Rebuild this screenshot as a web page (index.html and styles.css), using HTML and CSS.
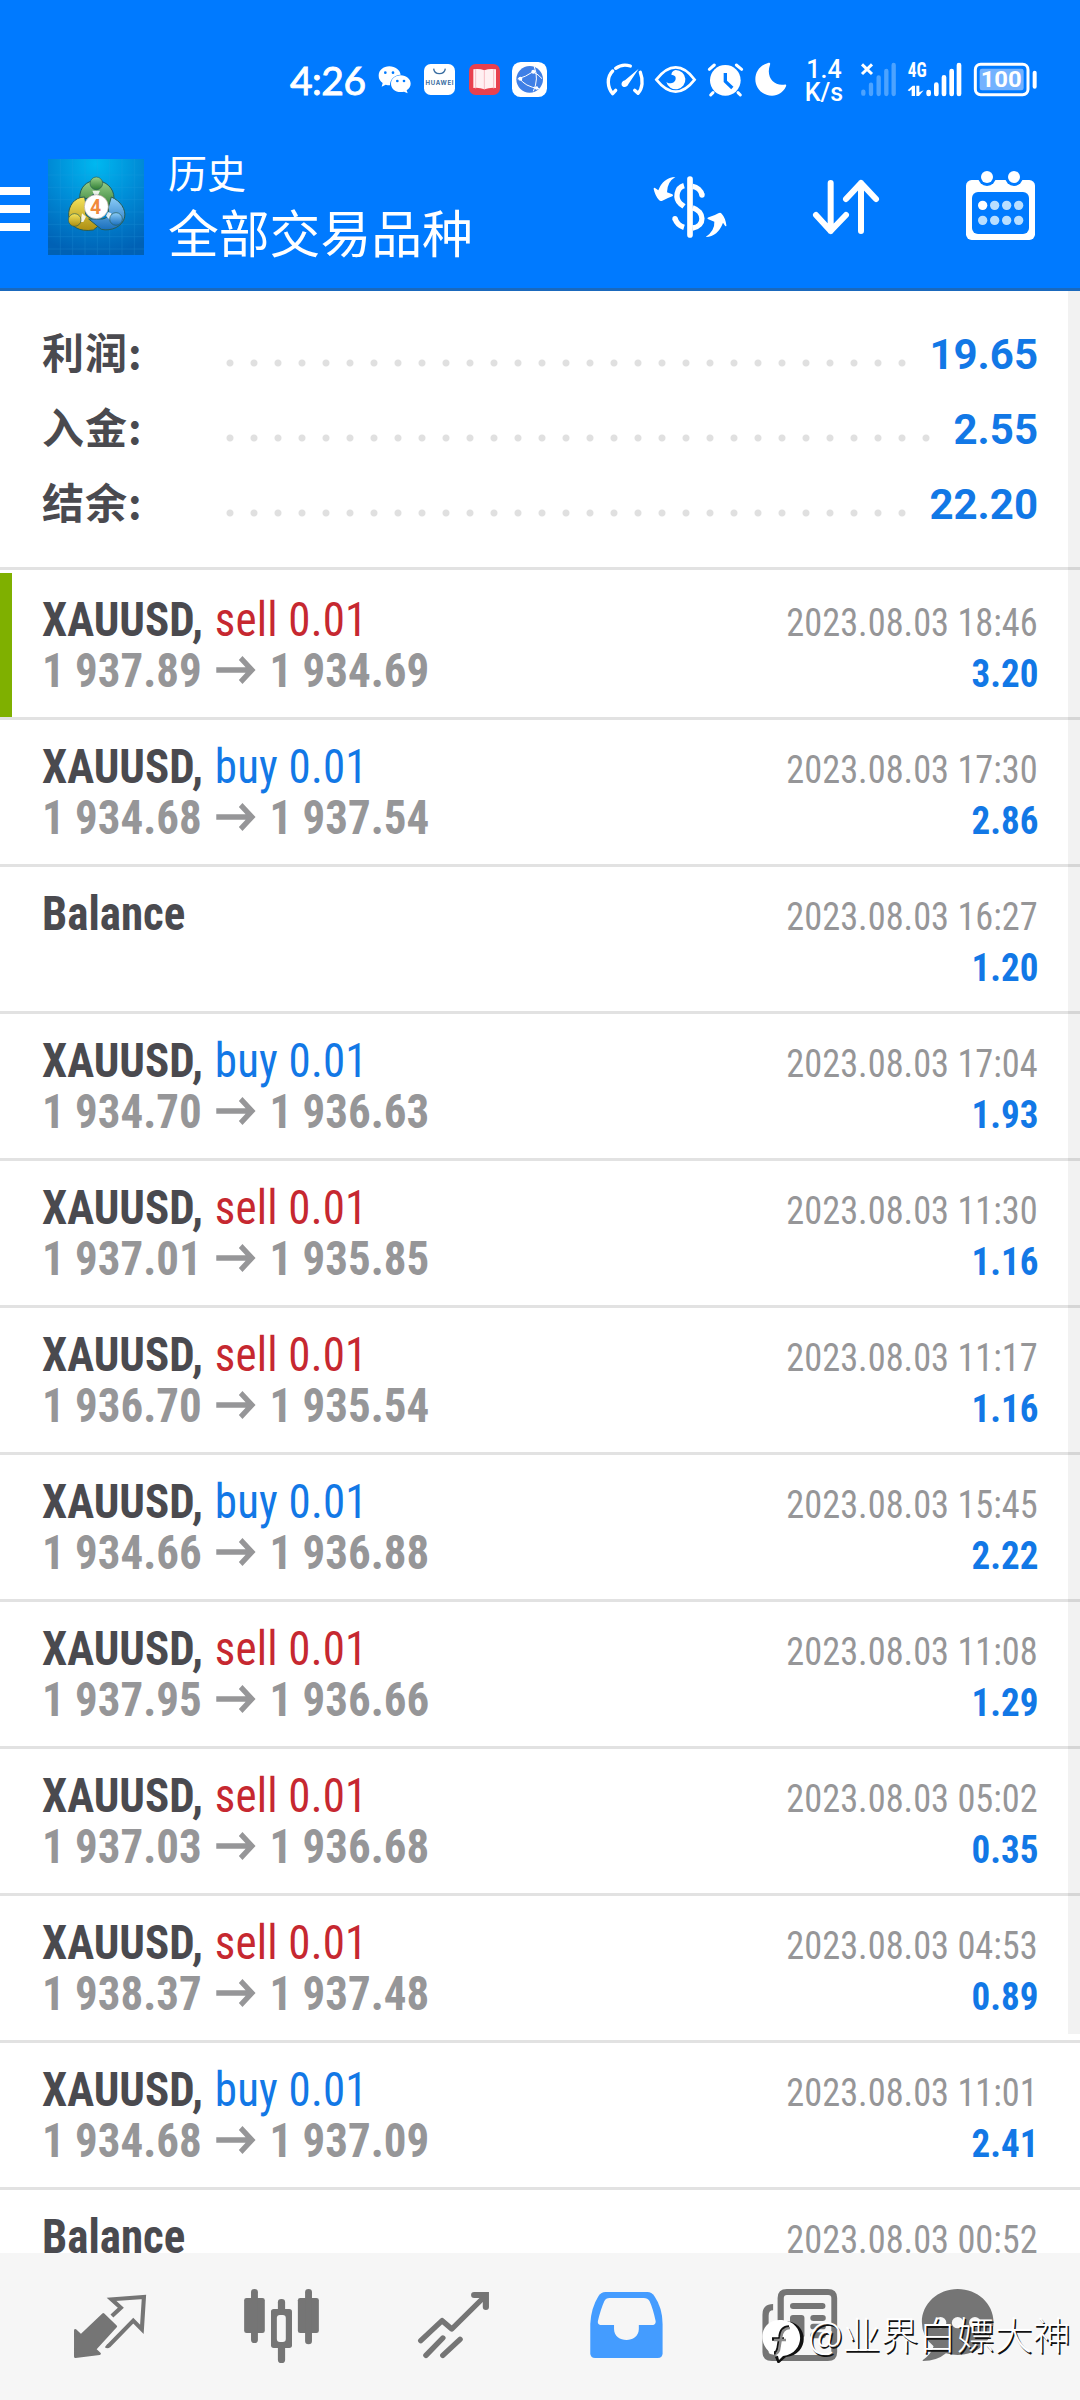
FILE: index.html
```html
<!DOCTYPE html>
<html lang="zh-CN">
<head>
<meta charset="utf-8">
<title>历史</title>
<link rel="stylesheet" href="styles.css">
</head>
<body>
<div class="screen">
  <header class="header">
    <div class="status">
      <span class="clock">4:26</span>
      <svg width="45" height="80" viewBox="315 0 135 240"><path fill="#fff" d="M358 79c-18 0-32 12-32 28 0 9 4 16 12 22l-3 11 12-6c4 1 8 2 13 2 0-18 13-31 32-32-2-14-16-25-34-25z"/><path fill="#fff" d="M392 106c-17 0-29 11-29 25s12 25 29 25c4 0 7 0 10-1l11 5-3-9c7-5 12-12 12-20 0-14-13-25-30-25z"/><g fill="#007aff"><circle cx="346" cy="98" r="4"/><circle cx="369" cy="98" r="4"/><circle cx="382" cy="123" r="4"/><circle cx="402" cy="123" r="4"/></g></svg>
      <svg width="44" height="80" viewBox="450 0 132 240"><rect x="462" y="72" width="93" height="93" rx="20" fill="#fff"/><path d="M491 86c2 20 32 20 35 0" fill="none" stroke="#386ca0" stroke-width="4"/><text x="508.500" y="134" class="store-name" text-anchor="middle" textLength="84">HUAWEI</text></svg>
      <svg width="43" height="80" viewBox="582 0 129 240"><rect x="597" y="72" width="93" height="93" rx="20" fill="#e8404e"/><path fill="#fff0f2" d="M610 88q18-3 33 3 15-6 35-3v56q-18-2-35 4-15-6-33-4z"/><path d="M643 90v58M617 88v57M671 88v57" stroke="#f7bcc4" stroke-width="3"/></svg>
      <svg width="44" height="80" viewBox="711 0 132 240"><rect x="726" y="66" width="105" height="105" rx="26" fill="#fff"/><circle cx="779" cy="118" r="40" fill="#3f7fe6"/><g fill="none" stroke="#fff" stroke-width="3"><path d="M793 81q14 35-3 73M743 117q25-7 45-21M748 114q16 26 59 32M790 96q15 7 26 20"/></g><g fill="#fff"><circle cx="790" cy="95" r="6"/><circle cx="751" cy="116" r="6"/><circle cx="800" cy="144" r="5"/></g></svg>
      <svg class="status-right" width="60" height="80" viewBox="0 0 180 240"><g fill="none" stroke="#fff" stroke-width="10" stroke-linecap="round" stroke-linejoin="round"><path d="M121 78Q97 70 77 85M68 93C49 112 52 142 68 161L77 151M151 97C160 120 158 145 144 160L134 151"/></g><path fill="#fff" d="M146 86l-31 47c-5 14-26 9-19-6q2-4 9-6z"/></svg>
      <svg width="52" height="80" viewBox="180 0 156 240"><path d="M199 119q28-37 58-37t57 37q-28 36-57 36t-58-36z" fill="none" stroke="#fff" stroke-width="8"/><path fill="#fff" d="M257 90a29 29 0 1 1-28 36c9 8 27 3 28-10 1-8-4-11-13-12 1-8 6-13 13-14z"/></svg>
      <svg width="47" height="80" viewBox="336 0 141 240"><circle cx="406" cy="121" r="46" fill="#fff"/><path d="M358 88l15-13M439 75l16 13M369 158l-7 7M444 158l7 7" stroke="#fff" stroke-width="9" stroke-linecap="round"/><path d="M406 99v25l21 20" fill="none" stroke="#007aff" stroke-width="10"/></svg>
      <svg width="41" height="80" viewBox="477 0 123 240"><path fill="#fff" d="M534 69c5-2 8 1 6 5-13 37 11 65 43 60 6-1 7 2 4 7-8 16-22 26-41 26-29 0-50-22-50-49 0-23 15-43 38-49z"/></svg>
      <div class="speed"><span>1.4</span><span>K/s</span></div>
      <svg width="49" height="80" viewBox="789 0 147 240"><path d="M816 73l30 29M846 73l-30 29" stroke="#fff" stroke-width="9"/><path d="M820 155v6M843 134v28M866 112v50M889 93v69M911 75v87" stroke="#4da3ff" stroke-width="13" stroke-linecap="round"/></svg>
      <svg width="64" height="80" viewBox="936 0 192 240"><text x="953" y="112" class="net" textLength="57" lengthAdjust="spacingAndGlyphs">4G</text><path d="M1016 156v6M1039 134v28M1062 112v50M1085 93v69M1107 75v87" stroke="#fff" stroke-width="14" stroke-linecap="round"/><path fill="#fff" d="M953 151l15-14h7v31h-10v-20l-7 6zM979 137h9v20l13-6-14 17h-8z"/></svg>
      <svg width="74" height="80" viewBox="1128 0 222 240"><rect x="1156" y="73" width="158" height="91" rx="16" fill="none" stroke="#fff" stroke-width="9"/><rect x="1169" y="86" width="132" height="65" rx="7" fill="#73b2ff"/><path d="M1334 98v42" stroke="#fff" stroke-width="12" stroke-linecap="round"/><text x="1172" y="142" class="charge" textLength="123" lengthAdjust="spacingAndGlyphs">100</text></svg>
    </div>
    <div class="toolbar">
      <div class="burger"><i></i><i></i><i></i></div>
      <svg class="logo" width="96" height="96" viewBox="144 57 288 288">
        <defs>
          <radialGradient id="sky" cx=".5" cy=".05" r=".95"><stop offset="0" stop-color="#00b8f0"/><stop offset=".5" stop-color="#008bd6"/><stop offset="1" stop-color="#0061b5"/></radialGradient>
          <linearGradient id="green" x2="0" y2="1"><stop offset="0" stop-color="#9ad18a"/><stop offset="1" stop-color="#2f7d34"/></linearGradient>
          <linearGradient id="gold" x2="0" y2="1"><stop offset="0" stop-color="#f5e45c"/><stop offset="1" stop-color="#ad8e12"/></linearGradient>
          <linearGradient id="blue" x2="0" y2="1"><stop offset="0" stop-color="#8ccdf8"/><stop offset="1" stop-color="#1a6fbd"/></linearGradient>
        </defs>
        <rect x="144" y="57" width="288" height="288" fill="url(#sky)"/>
        <path d="M181 57v288M218 57v288M255 57v288M292 57v288M329 57v288M366 57v288M403 57v288M144 105h288M144 142h288M144 179h288M144 216h288M144 253h288M144 290h288M144 327h288" stroke="#2aa4e4" stroke-width="2" opacity=".3"/>
        <g stroke="#285d55" stroke-width="3">
          <path fill="url(#green)" d="M239 174c0-32 20-52 49-52s54 22 54 52l-7 32-32-32q-15-26-35 0l-27 4z"/>
          <path fill="url(#gold)" d="M254 171c-31 0-50 27-48 58 2 29 31 48 74 41l16-13-25-23q-22-8-12-32z"/>
          <path fill="url(#blue)" d="M334 171c28 12 44 37 40 60-5 28-40 44-70 37l-38-31h41q24-2 18-35z"/>
        </g>
        <path fill="#fff" d="M277 152h23l-6 14h-11zM246 220l12 10-8 16h-8zM324 216l10 4v24l-16-16z" opacity=".85"/>
        <g stroke="#285d55" stroke-width="2"><circle cx="289" cy="130" r="19" fill="url(#green)"/><circle cx="224" cy="240" r="19" fill="url(#gold)"/><circle cx="348" cy="237" r="19" fill="url(#blue)"/></g>
        <circle cx="289" cy="200" r="36" fill="#fff" stroke="#b9a99a" stroke-width="2"/>
        <text x="287" y="221" class="logo-digit" text-anchor="middle">4</text>
      </svg>
      <div class="titles"><div class="title-small">历史</div><div class="title-main">全部交易品种</div></div>
      <svg class="icon-currency" width="80" height="72" viewBox="90 90 240 216"><g fill="none" stroke="#fff"><path d="M210 117v168" stroke-width="17" stroke-linecap="round"/><path d="M192 137c-23 7-28 38-11 54l11 8M218 139c13 2 25 12 28 26" stroke-width="16"/><path d="M218 203c36 12 38 55 0 61M192 262c-13-4-23-14-27-26" stroke-width="16"/></g><circle cx="246" cy="165" r="8" fill="#fff"/><circle cx="165" cy="236" r="8" fill="#fff"/><path fill="#fff" d="M166 111q-37 2-51 40l-10-7q-4-2-4 3 5 22 16 33 4 5 10 2 14-7 30-13 5-3 0-6l-16-6q0-31 25-46zM257 291q37-2 52-43l6 9q5 4 4-2-3-22-14-34-4-5-10-1-11 7-29 12-7 3-1 6l18 7q2 26-26 46z"/></svg>
      <svg class="icon-sort" width="73" height="63" viewBox="570 108 219 189"><path d="M632 129v144M588 225l44 48 46-48M723 273V129M678 177l45-48 45 48" fill="none" stroke="#fff" stroke-width="18" stroke-linecap="round" stroke-linejoin="round"/></svg>
      <svg class="icon-calendar" width="75" height="75" viewBox="1029 84 225 225"><rect x="1038" y="120" width="207" height="180" rx="17" fill="#fff"/><rect x="1056" y="156" width="171" height="126" rx="18" fill="#007aff"/><circle cx="1101" cy="111" r="27" fill="#007aff"/><circle cx="1182" cy="111" r="27" fill="#007aff"/><g fill="#fff"><circle cx="1101" cy="111" r="18"/><circle cx="1182" cy="111" r="18"/><circle cx="1088" cy="196" r="14"/></g><g fill="#b9deff"><circle cx="1124" cy="196" r="14"/><circle cx="1160" cy="196" r="14"/><circle cx="1196" cy="196" r="14"/><circle cx="1088" cy="241" r="14"/><circle cx="1124" cy="241" r="14"/><circle cx="1160" cy="241" r="14"/><circle cx="1196" cy="241" r="14"/></g></svg>
    </div>
  </header>

  <main class="content">
    <section class="summary">
      <div class="sum-row"><span class="sum-label">利润:</span><span class="dots"></span><span class="sum-value">19.65</span></div>
      <div class="sum-row"><span class="sum-label">入金:</span><span class="dots"></span><span class="sum-value">2.55</span></div>
      <div class="sum-row"><span class="sum-label">结余:</span><span class="dots"></span><span class="sum-value">22.20</span></div>
    </section>
    <section class="deals">
      <article class="deal marked"><div class="line"><span class="sym">XAUUSD, <span class="sell">sell 0.01</span></span><time>2023.08.03 18:46</time></div><div class="line"><span class="price">1 937.89 <svg class="arrow" viewBox="0 0 42 28"><path d="M0 14h38M26 2l12 12-12 12"/></svg> 1 934.69</span><span class="profit">3.20</span></div></article>
      <article class="deal"><div class="line"><span class="sym">XAUUSD, <span class="buy">buy 0.01</span></span><time>2023.08.03 17:30</time></div><div class="line"><span class="price">1 934.68 <svg class="arrow" viewBox="0 0 42 28"><path d="M0 14h38M26 2l12 12-12 12"/></svg> 1 937.54</span><span class="profit">2.86</span></div></article>
      <article class="deal"><div class="line"><span class="sym">Balance</span><time>2023.08.03 16:27</time></div><div class="line"><span class="price">&nbsp;</span><span class="profit">1.20</span></div></article>
      <article class="deal"><div class="line"><span class="sym">XAUUSD, <span class="buy">buy 0.01</span></span><time>2023.08.03 17:04</time></div><div class="line"><span class="price">1 934.70 <svg class="arrow" viewBox="0 0 42 28"><path d="M0 14h38M26 2l12 12-12 12"/></svg> 1 936.63</span><span class="profit">1.93</span></div></article>
      <article class="deal"><div class="line"><span class="sym">XAUUSD, <span class="sell">sell 0.01</span></span><time>2023.08.03 11:30</time></div><div class="line"><span class="price">1 937.01 <svg class="arrow" viewBox="0 0 42 28"><path d="M0 14h38M26 2l12 12-12 12"/></svg> 1 935.85</span><span class="profit">1.16</span></div></article>
      <article class="deal"><div class="line"><span class="sym">XAUUSD, <span class="sell">sell 0.01</span></span><time>2023.08.03 11:17</time></div><div class="line"><span class="price">1 936.70 <svg class="arrow" viewBox="0 0 42 28"><path d="M0 14h38M26 2l12 12-12 12"/></svg> 1 935.54</span><span class="profit">1.16</span></div></article>
      <article class="deal"><div class="line"><span class="sym">XAUUSD, <span class="buy">buy 0.01</span></span><time>2023.08.03 15:45</time></div><div class="line"><span class="price">1 934.66 <svg class="arrow" viewBox="0 0 42 28"><path d="M0 14h38M26 2l12 12-12 12"/></svg> 1 936.88</span><span class="profit">2.22</span></div></article>
      <article class="deal"><div class="line"><span class="sym">XAUUSD, <span class="sell">sell 0.01</span></span><time>2023.08.03 11:08</time></div><div class="line"><span class="price">1 937.95 <svg class="arrow" viewBox="0 0 42 28"><path d="M0 14h38M26 2l12 12-12 12"/></svg> 1 936.66</span><span class="profit">1.29</span></div></article>
      <article class="deal"><div class="line"><span class="sym">XAUUSD, <span class="sell">sell 0.01</span></span><time>2023.08.03 05:02</time></div><div class="line"><span class="price">1 937.03 <svg class="arrow" viewBox="0 0 42 28"><path d="M0 14h38M26 2l12 12-12 12"/></svg> 1 936.68</span><span class="profit">0.35</span></div></article>
      <article class="deal"><div class="line"><span class="sym">XAUUSD, <span class="sell">sell 0.01</span></span><time>2023.08.03 04:53</time></div><div class="line"><span class="price">1 938.37 <svg class="arrow" viewBox="0 0 42 28"><path d="M0 14h38M26 2l12 12-12 12"/></svg> 1 937.48</span><span class="profit">0.89</span></div></article>
      <article class="deal"><div class="line"><span class="sym">XAUUSD, <span class="buy">buy 0.01</span></span><time>2023.08.03 11:01</time></div><div class="line"><span class="price">1 934.68 <svg class="arrow" viewBox="0 0 42 28"><path d="M0 14h38M26 2l12 12-12 12"/></svg> 1 937.09</span><span class="profit">2.41</span></div></article>
      <article class="deal"><div class="line"><span class="sym">Balance</span><time>2023.08.03 00:52</time></div></article>
    </section>
    <div class="scrollbar"></div>
  </main>

  <nav class="tabs">
    <svg class="tab" viewBox="69.7 219 499.5 441" preserveAspectRatio="none"><path fill="#757575" stroke="#757575" stroke-width="8" stroke-linejoin="round" d="M300 403l36 36-61 69 14 13-70 9v-79l16 16z"/><path fill="none" stroke="#757575" stroke-width="12" d="M325 408l26-25-27-25 94-7-6 97-25-26-71 75q-4 3-8 0"/></svg>
    <svg class="tab" viewBox="569.2 219 499.5 441" preserveAspectRatio="none"><g fill="#757575"><rect x="709" y="354" width="60" height="105" rx="7"/><rect x="729" y="327" width="20" height="162" rx="10"/><rect x="865" y="354" width="61" height="105" rx="7"/><rect x="886" y="327" width="20" height="166" rx="10"/><rect x="807" y="357" width="21" height="192" rx="10"/><rect x="787" y="387" width="61" height="117" rx="8"/></g><rect x="804" y="405" width="26" height="81" rx="9" fill="#f6f6f6"/></svg>
    <svg class="tab" viewBox="1068.7 219 499.5 441" preserveAspectRatio="none"><g fill="none" stroke="#757575" stroke-width="16" stroke-linecap="round"><path d="M1222 482l62-60 28 25 97-99" stroke-linejoin="round"/><path d="M1377 345h34v36" stroke-width="18"/><path d="M1237 526l49-52M1286 526l50-48"/></g></svg>
    <svg class="tab" viewBox="0 219 499.5 441" preserveAspectRatio="none"><path fill="#449cff" d="M190 336h122q12 0 20 12 24 36 24 84v88q0 14-14 14H160q-14 0-14-14v-88q2-48 24-84 8-12 20-12z"/><path fill="#f6f6f6" d="M202 354h99q12 0 17 9 10 22 18 61 0 10-7 11h-42v12c0 44-72 44-72 0v-12h-40q-8-1-7-11 8-36 19-61 4-9 15-9z"/></svg>
    <svg class="tab" viewBox="499.5 219 499.5 441" preserveAspectRatio="none"><path fill="#757575" d="M677 372q-31 0-31 32v112q0 27 28 27h162q27 0 27-27V354q0-27-27-27H717q-27 0-27 27v162q0 8-7 8-19 0-19-8V407q0-16 13-16z"/><rect x="708" y="345" width="138" height="180" rx="9" fill="#f6f6f6"/><g fill="#757575"><rect x="726" y="369" width="103" height="18" rx="9"/><rect x="726" y="405" width="42" height="70" rx="9"/><rect x="785" y="405" width="45" height="18" rx="9"/><rect x="785" y="431" width="45" height="17" rx="8"/><rect x="785" y="457" width="45" height="18" rx="9"/></g></svg>
    <svg class="tab" viewBox="999 219 499.5 441" preserveAspectRatio="none"><path fill="#757575" d="M1213 327c57 0 104 44 104 99s-47 99-104 99q-17 0-34-5-26 23-67 23-2 0 0-3 24-17 31-41-34-29-34-73c0-55 47-99 104-99z"/><g fill="#f6f6f6"><circle cx="1163" cy="428" r="17"/><circle cx="1213" cy="428" r="17"/><circle cx="1263" cy="428" r="17"/></g></svg>
  </nav>
  <div class="watermark">
    <svg width="46" height="48" viewBox="0 0 46 48"><path fill="#111" d="M22 6c26 0 26 34 2 36l-8 7-3-7q10-1 9-36z"/><path fill="#fff" d="M20 5c-25-2-26 31-4 36l1 4 4-4c23-3 23-34-1-36z"/><path d="M27 12q-8 0-9 10l-2 12q-1 4-4 4M10 24h12" fill="none" stroke="#111" stroke-width="3.500"/><path d="M28 13q-8 0-9 10l-2 12q-1 3-3 4M12 25h12" fill="none" stroke="#8a8a8a" stroke-width="2.500"/></svg>
    <span>@业界白嫖大神</span>
  </div>
</div>
</body>
</html>
```
FILE: styles.css
```css
* { box-sizing: border-box; }
body { margin: 0; background: #fff; font-family: Roboto, "Noto Sans CJK SC", sans-serif; }
svg { display: block; flex: none; }
.screen { position: relative; width: 1080px; height: 2400px; overflow: hidden; display: flex; flex-direction: column; background: #fff; }

.header { flex: none; height: 291px; background: #007aff; border-bottom: 3px solid #1a69bd; color: #fff; padding-top: 40px; }
.status { display: flex; height: 80px; padding-left: 290px; }
.clock { width: 85px; font: 400 39px/81px Lato, sans-serif; letter-spacing: -0.5px; -webkit-text-stroke: 0.9px #fff; }
.status-right { margin-left: 39px; }
.speed { width: 63px; padding: 18px 11px 0 16px; font: 500 25px/23px Roboto, sans-serif; display: flex; flex-direction: column; align-items: center; }
.store-name { font: 700 18px Inter, sans-serif; fill: #386ca0; }
.net { font: 700 58px "Roboto Condensed", Roboto, sans-serif; fill: #fff; }
.charge { font: 700 66px Roboto, sans-serif; fill: #fff; }
.logo-digit { font: 700 58px Roboto, sans-serif; fill: #f08a3c; }

.toolbar { display: flex; height: 168px; }
.burger { width: 30px; padding-top: 67px; display: flex; flex-direction: column; gap: 10px; }
.burger i { height: 8px; background: #fff; }
.logo { margin: 39px 0 0 18px; }
.titles { width: 480px; padding: 23px 0 0 24px; font-family: "Noto Sans CJK SC", sans-serif; }
.title-small { font-size: 39px; line-height: 56px; }
.title-main { font-size: 50.8px; line-height: 64px; }
.icon-currency { margin: 50px 0 0 26px; }
.icon-sort { margin: 56px 0 0 80px; }
.icon-calendar { margin: 48px 0 0 80px; }

.content { position: relative; flex: 1; min-height: 0; overflow: hidden; }
.summary { height: 276px; padding: 26px 42px 0 42px; }
.sum-row { display: flex; height: 75px; align-items: center; }
.sum-label { width: 176px; height: 75px; font: 700 42px/68px "Noto Sans CJK SC", sans-serif; letter-spacing: 1px; color: #4a4a4f; }
.dots { flex: 1; height: 24px; margin: 16px 13px 0 0; background: radial-gradient(circle at 12px 12px, #e0e0e0 3px, transparent 4px) 0 0 / 24px 24px; }
.sum-value { font-size: 42px; font-weight: 700; color: #1278e6; }

.deals { border-top: 3px solid #e2e2e2; padding-top: 3px; font-family: "Roboto Condensed", Roboto, sans-serif; font-stretch: 75%; }
.deal { height: 147px; padding: 21px 42px 0 42px; border-bottom: 3px solid #e2e2e2; }
.marked { background: linear-gradient(#7fb000, #7fb000) 0 0 / 12px 144px no-repeat; }
.line { display: flex; justify-content: space-between; align-items: baseline; height: 51px; line-height: 51px; white-space: pre; }
/* the list face is a little narrower than the stock condensed cut */
.sym, .price { font-size: 48px; font-weight: 700; color: #4a4a4f; transform: scaleX(0.937); transform-origin: left; }
.price { color: #969698; }
.sell, .buy { font-weight: 400; color: #c62830; margin-left: 1.5px; letter-spacing: 0.2px; }
.buy { color: #1278e6; }
.line time, .profit { font-size: 39px; transform: scaleX(0.932); transform-origin: right; }
.line time { color: #969698; }
.profit { font-weight: 700; color: #1278e6; transform: scaleX(0.95); }
.arrow { display: inline-block; width: 46px; height: 28px; margin: 0 2px; vertical-align: 3px; }
.arrow path { fill: none; stroke: #969698; stroke-width: 5.5; }
.scrollbar { position: absolute; right: 0; top: 0; width: 12px; height: 1743px; background: rgba(0, 0, 0, .05); }

.tabs { flex: none; height: 147px; background: #f6f6f6; display: flex; padding-left: 24px; }
.tab { width: 172px; height: 147px; }

.watermark { position: absolute; left: 762px; top: 2311px; display: flex; align-items: center; height: 44px; font: 300 38px/44px "Noto Sans CJK SC", sans-serif; color: #fff; text-shadow: 1.5px 1.5px 0 #111; white-space: nowrap; }
.watermark svg { margin-top: 12px; }
```
